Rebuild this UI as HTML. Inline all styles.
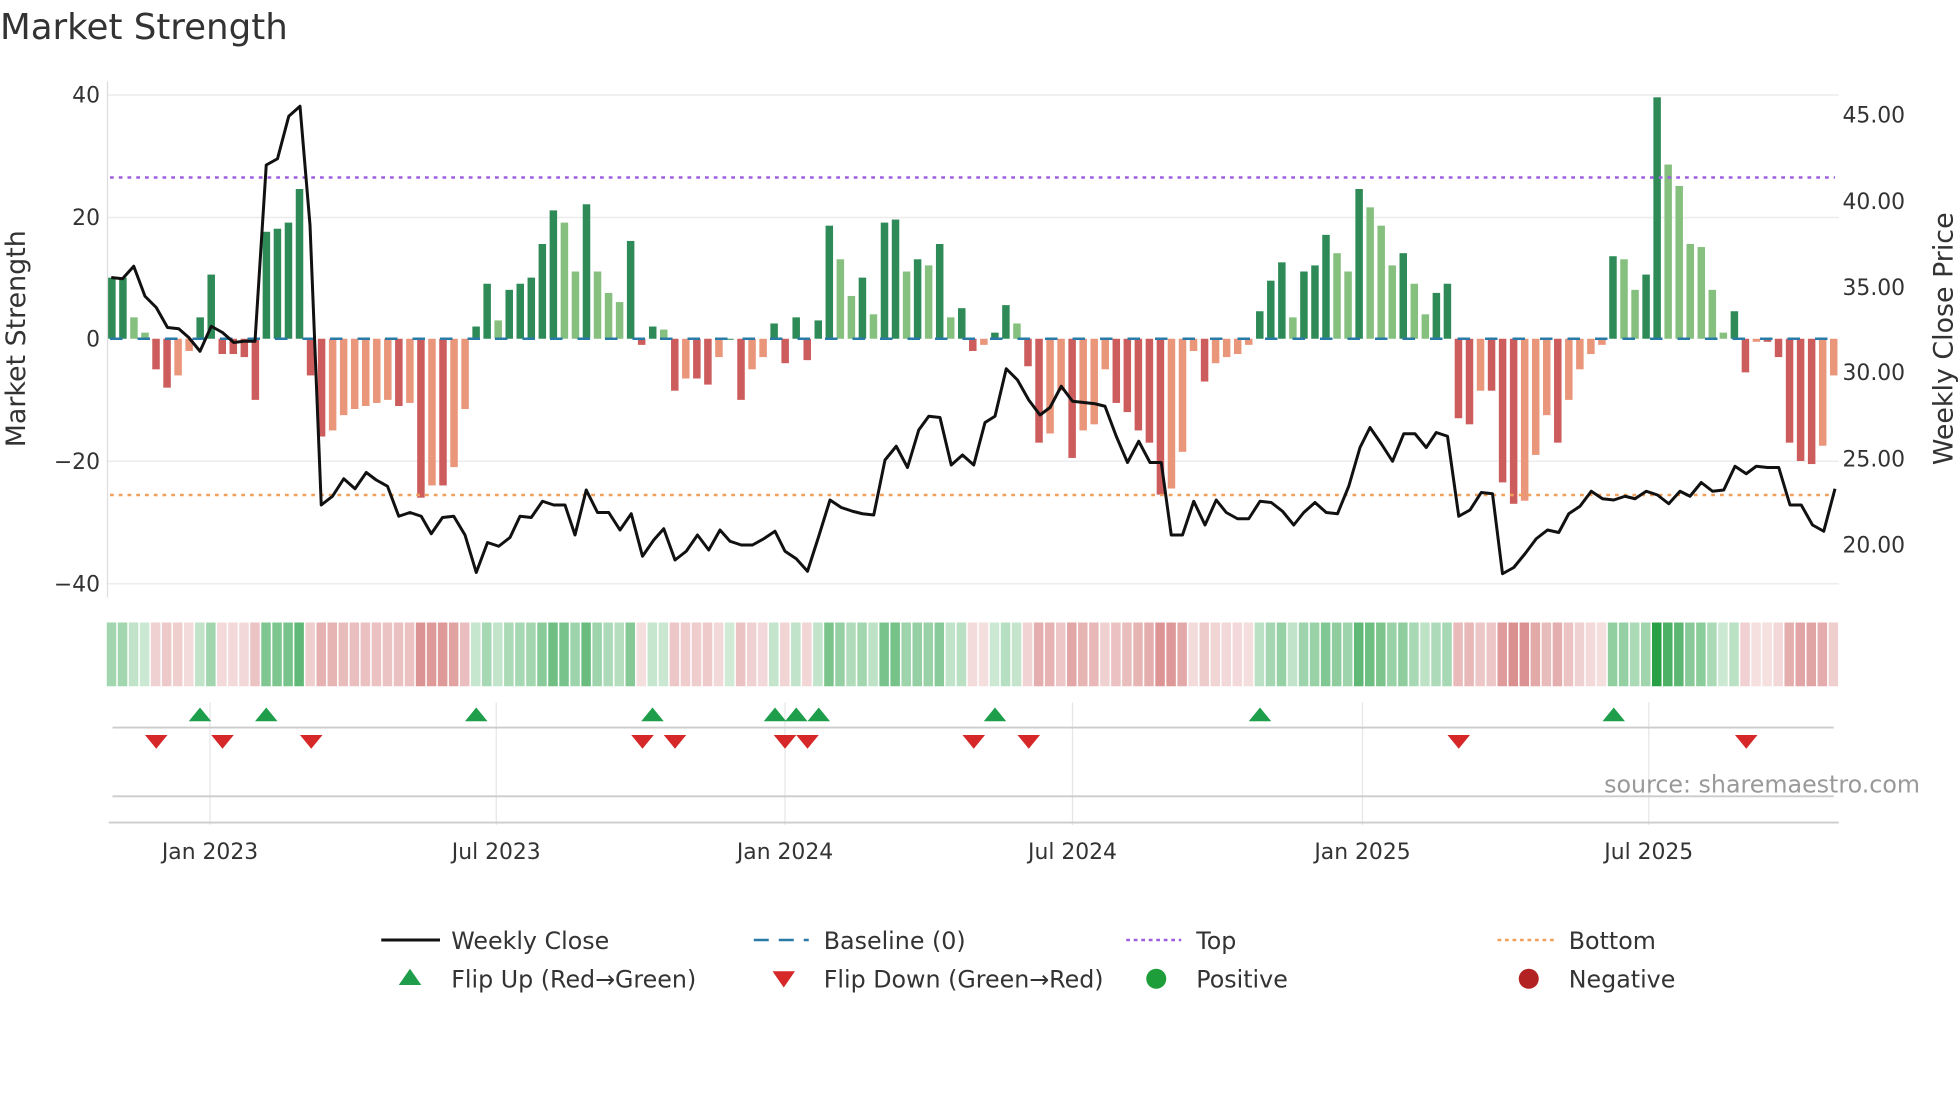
<!DOCTYPE html>
<html><head><meta charset="utf-8"><style>
html,body{margin:0;padding:0;background:#fff;}
svg{display:block;font-family:"DejaVu Sans","Liberation Sans",sans-serif;}
</style></head><body>
<svg id="s" width="1960" height="1102" viewBox="0 0 1568 881.6" xmlns="http://www.w3.org/2000/svg">
<rect width="1568" height="881.6" fill="#fff"/>
<text x="0" y="31" font-size="28.5" fill="#333">Market Strength</text>
<g stroke="#ececec" stroke-width="1.2">
<line x1="86" y1="76" x2="1471" y2="76"/><line x1="86" y1="174" x2="1471" y2="174"/>
<line x1="86" y1="369" x2="1471" y2="369"/><line x1="86" y1="467" x2="1471" y2="467"/>
</g>
<line x1="86" y1="65" x2="86" y2="478" stroke="#ddd"/>
<g font-size="17.5" fill="#333" text-anchor="end">
<text x="80" y="82">40</text><text x="80" y="180">20</text><text x="80" y="277">0</text>
<text x="80" y="375">−20</text><text x="80" y="473">−40</text>
</g>
<g font-size="17.5" fill="#333">
<text x="1474" y="98">45.00</text><text x="1474" y="167">40.00</text><text x="1474" y="236">35.00</text>
<text x="1474" y="304">30.00</text><text x="1474" y="373">25.00</text><text x="1474" y="442">20.00</text>
</g>
<text transform="translate(20,271) rotate(-90)" font-size="21.5" fill="#333" text-anchor="middle">Market Strength</text>
<text transform="translate(1562,271) rotate(-90)" font-size="21.5" fill="#333" text-anchor="middle">Weekly Close Price</text>
<g id="bars"></g>
<line x1="88" y1="271" x2="1468" y2="271" stroke="#2a7aa8" stroke-width="2" stroke-dasharray="10,12"/>
<line x1="88" y1="142" x2="1468" y2="142" stroke="#9d5fe0" stroke-width="2" stroke-dasharray="3,4"/>
<line x1="88" y1="396" x2="1468" y2="396" stroke="#f0a05a" stroke-width="2" stroke-dasharray="3,4"/>
<polyline id="price" fill="none" stroke="#111" stroke-width="2.4" stroke-linejoin="round"/>
<g id="strip"></g>
<g stroke="#e6e6e6" stroke-width="1">
<line x1="168" y1="562" x2="168" y2="660"/><line x1="397" y1="562" x2="397" y2="660"/>
<line x1="628" y1="562" x2="628" y2="660"/><line x1="858" y1="562" x2="858" y2="660"/>
<line x1="1090" y1="562" x2="1090" y2="660"/><line x1="1319" y1="562" x2="1319" y2="660"/>
</g>
<line x1="90" y1="582" x2="1467" y2="582" stroke="#ccc" stroke-width="1.5"/>
<line x1="90" y1="637" x2="1467" y2="637" stroke="#ccc" stroke-width="1.5"/>
<line x1="87" y1="658" x2="1471" y2="658" stroke="#ccc" stroke-width="1.5"/>
<g id="marks"></g>
<text x="1536" y="634" font-size="19" fill="#999" text-anchor="end">source: sharemaestro.com</text>
<g font-size="17.5" fill="#333" text-anchor="middle">
<text x="168" y="687">Jan 2023</text><text x="397" y="687">Jul 2023</text><text x="628" y="687">Jan 2024</text>
<text x="858" y="687">Jul 2024</text><text x="1090" y="687">Jan 2025</text><text x="1319" y="687">Jul 2025</text>
</g>
<g font-size="19" fill="#333">
<line x1="305" y1="752" x2="352" y2="752" stroke="#111" stroke-width="2.4"/>
<text x="361" y="759">Weekly Close</text>
<line x1="603" y1="752" x2="647" y2="752" stroke="#2a7aa8" stroke-width="2" stroke-dasharray="12,8"/>
<text x="659" y="759">Baseline (0)</text>
<line x1="901" y1="752" x2="945" y2="752" stroke="#9d5fe0" stroke-width="2" stroke-dasharray="3,3"/>
<text x="957" y="759">Top</text>
<line x1="1198" y1="752" x2="1243" y2="752" stroke="#f0a05a" stroke-width="2" stroke-dasharray="3,3"/>
<text x="1255" y="759">Bottom</text>
<polygon points="319,788 337,788 328,775" fill="#1e9e4a"/>
<text x="361" y="790">Flip Up (Red→Green)</text>
<polygon points="618,777 636,777 627,790" fill="#d62828"/>
<text x="659" y="790">Flip Down (Green→Red)</text>
<circle cx="925" cy="783" r="8" fill="#1e9e3a"/>
<text x="957" y="790">Positive</text>
<circle cx="1223" cy="783" r="8" fill="#b22222"/>
<text x="1255" y="790">Negative</text>
</g>
</svg>
<script>
var v=[10,10,3.5,1,-5,-8,-6,-2,3.5,10.5,-2.5,-2.5,-3,-10,17.5,18,19,24.5,-6,-16,-15,-12.5,-11.5,-11,-10.5,-10,-11,-10.5,-26,-24,-24,-21,-11.5,2,9,3,8,9,10,15.5,21,19,11,22,11,7.5,6,16,-1,2,1.5,-8.5,-6.5,-6.5,-7.5,-3,0,-10,-5,-3,2.5,-4,3.5,-3.5,3,18.5,13,7,10,4,19,19.5,11,13,12,15.5,3.5,5,-2,-1,1,5.5,2.5,-4.5,-17,-15.5,-8.5,-19.5,-15,-14,-5,-10.5,-12,-15,-17,-25.5,-24.5,-18.5,-2,-7,-4,-3,-2.5,-1,4.5,9.5,12.5,3.5,11,12,17,14,11,24.5,21.5,18.5,12,14,9,4,7.5,9,-13,-14,-8.5,-8.5,-23.5,-27,-26.5,-19,-12.5,-17,-10,-5,-2.5,-1,13.5,13,8,10.5,39.5,28.5,25,15.5,15,8,1,4.5,-5.5,-0.5,-0.5,-3,-17,-20,-20.5,-17.5,-6];
var NS="http://www.w3.org/2000/svg";
function el(t,a,p){var e=document.createElementNS(NS,t);for(var k in a)e.setAttribute(k,a[k]);document.getElementById(p).appendChild(e);}
for(var i=0;i<v.length;i++){
 var x=89.5+8.83*i, val=v[i], p=i>0?v[i-1]:0, c;
 if(val>=0) c=(val>=p)?"#2e8b57":"#86c07f"; else c=(val<=p)?"#cd5c5c":"#e9967a";
 var h=Math.abs(val)*4.89; var y=val>=0?271-h:271;
 el("rect",{x:x-3,y:y,width:6,height:Math.max(h,0.8),fill:c},"bars");
 var a=Math.min(1,0.22+Math.abs(val)/35*0.75);
 var sc=val>=0?"rgba(40,160,70,"+a+")":"rgba(195,70,70,"+(a*0.75)+")";
 el("rect",{x:x-4.1,y:498,width:7.6,height:51,fill:sc},"strip");
}
var pts="89,222 98,223 107,213 116,237 125,246 134,262 143,263 151,270 160,281 169,261 178,266 187,274 195,273 204,273 213,132 222,127 231,93 240,85 248,180 257,404 266,397 275,383 284,391 293,378 301,384 310,389 319,413 328,410 337,413 345,427 354,414 363,413 372,428 381,458 390,434 399,437 408,430 416,413 425,414 434,401 443,404 452,404 460,428 469,392 478,410 487,410 496,424 505,411 514,445 523,432 531,423 540,448 549,441 558,428 567,440 576,424 584,433 593,436 602,436 611,431 620,425 628,441 637,447 646,457 655,429 664,400 673,406 682,409 690,411 699,412 708,368 717,357 726,374 735,344 743,333 752,334 761,372 770,364 779,372 788,338 796,333 805,295 814,304 823,320 832,332 840,326 849,309 858,321 867,322 876,323 884,325 893,349 902,370 911,353 920,370 929,370 937,428 946,428 955,401 964,420 973,400 981,410 990,415 999,415 1008,401 1017,402 1026,409 1035,420 1043,410 1052,402 1061,410 1070,411 1079,389 1088,358 1096,342 1105,355 1114,369 1123,347 1132,347 1141,358 1149,346 1158,349 1167,413 1176,408 1185,394 1194,395 1202,459 1211,454 1220,443 1229,431 1238,424 1247,426 1255,411 1264,405 1273,393 1282,399 1291,400 1300,397 1308,399 1317,393 1326,396 1335,403 1344,393 1352,397 1361,386 1370,393 1379,392 1388,373 1397,379 1405,373 1414,374 1423,374 1432,404 1441,404 1450,420 1459,425 1468,391";
document.getElementById("price").setAttribute("points",pts);
[160,213,381,522,620,637,655,796,1008,1291].forEach(function(x){el("polygon",{points:(x-9)+",577 "+(x+9)+",577 "+x+",566",fill:"#1e9e4a"},"marks");});
[125,178,249,514,540,628,646,779,823,1167,1397].forEach(function(x){el("polygon",{points:(x-9)+",588 "+(x+9)+",588 "+x+",599",fill:"#d62828"},"marks");});
</script>
</body></html>
